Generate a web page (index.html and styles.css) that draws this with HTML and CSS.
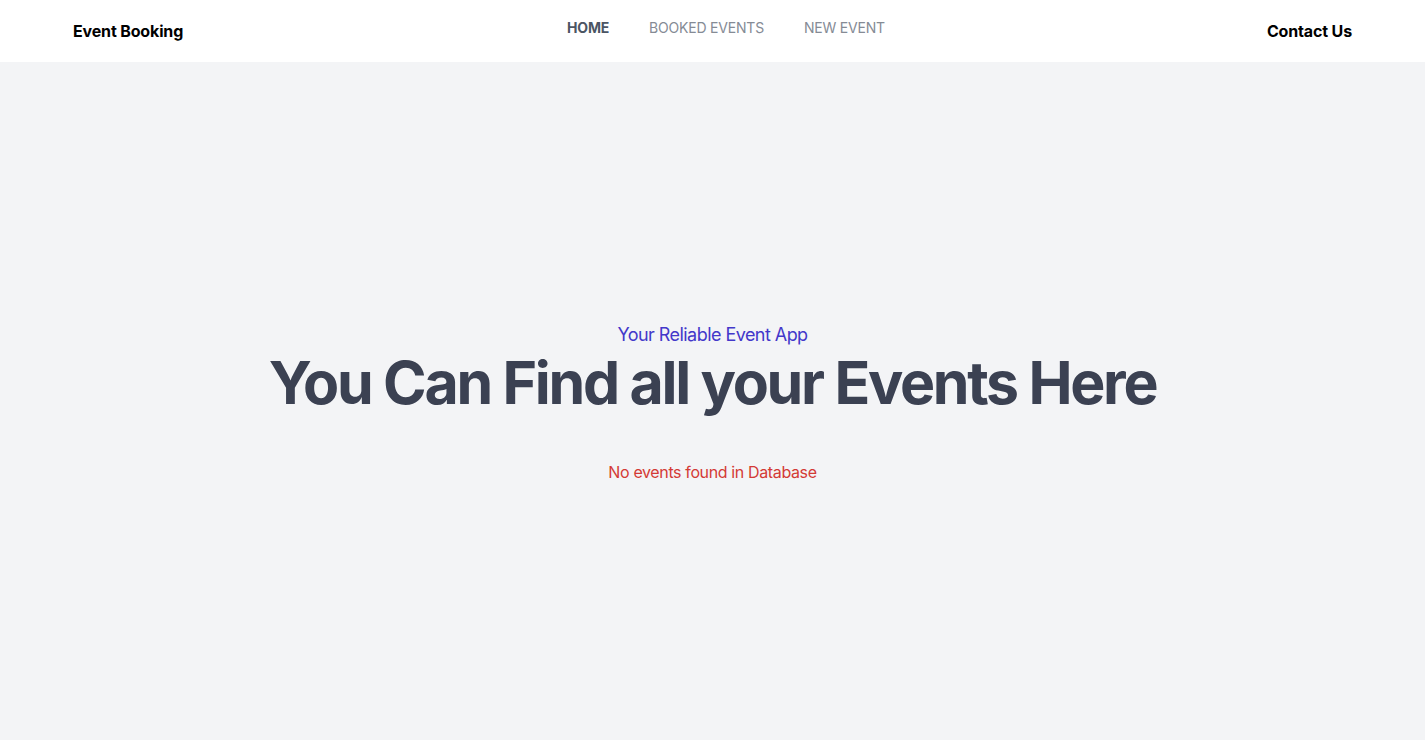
FILE: index.html
```html
<!DOCTYPE html>
<html lang="en">
<head>
<meta charset="utf-8">
<title>Event Booking</title>
<link rel="stylesheet" href="styles.css">
</head>
<body>
<header class="header">
  <a class="brand" href="#">Event Booking</a>
  <nav class="nav">
    <a class="nav-link active" href="#">HOME</a>
    <a class="nav-link" href="#">BOOKED EVENTS</a>
    <a class="nav-link" href="#">NEW EVENT</a>
  </nav>
  <a class="contact" href="#">Contact Us</a>
</header>
<main class="hero">
  <div class="hero-inner">
    <p class="tagline">Your Reliable Event App</p>
    <h1 class="title">You Can Find all your Events Here</h1>
    <p class="empty">No events found in Database</p>
  </div>
</main>
</body>
</html>
```
FILE: styles.css
```css
* { box-sizing: border-box; }
html, body { margin: 0; padding: 0; }
body {
  font-family: Inter, "Noto Sans", sans-serif;
  background: #f3f4f6;
  color: #111827;
  min-height: 100vh;
  display: flex;
  flex-direction: column;
}
a { text-decoration: none; }
.header {
  height: 62px;
  background: #ffffff;
  display: flex;
  align-items: center;
  justify-content: space-between;
  padding: 0 73px;
  position: relative;
}
.brand, .contact {
  color: #000;
  font-weight: 700;
  font-size: 16px;
  line-height: 24px;
  letter-spacing: -0.15px;
}
.nav {
  position: absolute;
  left: 0;
  right: 0;
  top: 0;
  height: 56px;
  display: flex;
  justify-content: center;
  align-items: center;
  gap: 40px;
  pointer-events: none;
  padding-left: 27px;
}
.nav-link {
  pointer-events: auto;
  font-size: 14px;
  line-height: 20px;
  color: #858b95;
  letter-spacing: -0.2px;
}
.nav-link.active {
  color: #4b5563;
  font-weight: 700;
}
.hero {
  flex: 1;
  display: flex;
  align-items: center;
  justify-content: center;
  text-align: center;
}
.tagline {
  margin: 0;
  color: #4338ca;
  font-size: 18px;
  line-height: 28px;
  letter-spacing: -0.55px;
  padding-top: 2px;
}
.title {
  margin: 4px 0 0;
  color: #3b4152;
  font-size: 59px;
  line-height: 60px;
  font-weight: 700;
  letter-spacing: -2.3px;
}
.empty {
  margin: 47px 0 0;
  color: #d33a35;
  font-size: 16px;
  line-height: 24px;
  letter-spacing: -0.37px;
}
```
